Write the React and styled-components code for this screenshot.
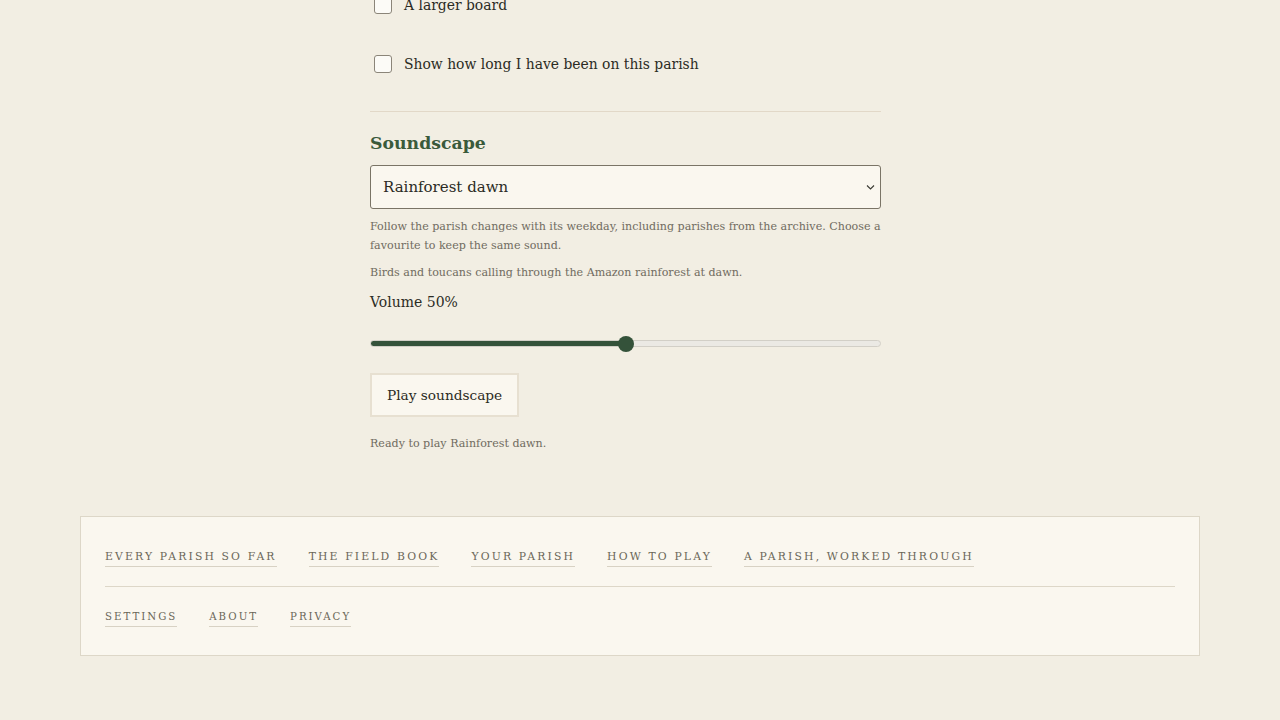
import React, { useState } from "react";
import styled, { createGlobalStyle } from "styled-components";

const GlobalStyle = createGlobalStyle`
  html, body {
    margin: 0;
    padding: 0;
    background: #f2eee3;
    font-family: "DejaVu Serif", "Liberation Serif", serif;
    color: #2b2b24;
  }
  body {
    overflow: hidden;
  }
`;

const Page = styled.div`
  display: flex;
  flex-direction: column;
  align-items: center;
  padding-bottom: 60px;
`;

const Column = styled.main`
  width: 511px;
  margin-top: -16px;
  margin-right: 29px;
  display: flex;
  flex-direction: column;
`;

const OptionRow = styled.label`
  display: flex;
  align-items: center;
  gap: 12px;
  min-height: 42px;
  margin-bottom: 17px;
  padding-left: 4px;
  font-size: 13.9px;
  cursor: pointer;
`;

const Box = styled.span`
  width: 18px;
  height: 18px;
  box-sizing: border-box;
  border: 1px solid #8b8579;
  border-radius: 3px;
  background: #fcfbf7;
  flex-shrink: 0;
`;

const Rule = styled.hr`
  border: 0;
  border-top: 1px solid #e2d8c8;
  margin: 9px 0 0;
  width: 100%;
`;

const Heading = styled.h2`
  margin: 18px 0 0;
  font-size: 17.3px;
  line-height: 26px;
  font-weight: 700;
  color: #3a5a3b;
`;

const SelectWrap = styled.div`
  position: relative;
  margin-top: 9px;
`;

const Select = styled.select`
  appearance: none;
  width: 100%;
  height: 44px;
  box-sizing: border-box;
  border: 1px solid #7a7466;
  border-radius: 3px;
  background: #faf7ef;
  padding: 0 12px;
  font-family: inherit;
  font-size: 15px;
  color: #2b2b24;
`;

const Chevron = styled.svg`
  position: absolute;
  right: 6px;
  top: 19px;
  pointer-events: none;
`;

const Help = styled.p`
  margin: 8px 0 0;
  font-size: 11.1px;
  line-height: 19px;
  color: #706b60;
`;

const VolumeLabel = styled.div`
  margin-top: 9px;
  font-size: 14px;
  line-height: 22px;
  color: #2b2b24;
`;

const Range = styled.input`
  appearance: none;
  -webkit-appearance: none;
  width: 100%;
  height: 7px;
  margin: 27px 0 0;
  border: 1px solid #d2cfc7;
  border-radius: 4px;
  box-sizing: border-box;
  outline: none;

  &::-webkit-slider-thumb {
    -webkit-appearance: none;
    width: 16px;
    height: 16px;
    border-radius: 50%;
    background: #34523a;
    border: none;
  }
`;

const PlayButton = styled.button`
  align-self: flex-start;
  margin-top: 26px;
  height: 44px;
  padding: 0 15px;
  background: #faf7ef;
  border: 2px solid #e7e0d1;
  font-family: inherit;
  font-size: 13.7px;
  color: #2b2b24;
  cursor: pointer;
`;

const Status = styled(Help)`
  margin-top: 17px;
`;

const Footer = styled.footer`
  width: 1120px;
  box-sizing: border-box;
  margin-top: 63px;
  background: #faf7ef;
  border: 1px solid #ddd7c8;
  padding: 32px 24px 28px;
`;

const LinkRow = styled.nav`
  display: flex;
  gap: 32px;
`;

const FooterLink = styled.a`
  font-size: ${(p) => (p.$small ? "10.2px" : "10.8px")};
  line-height: 16px;
  letter-spacing: ${(p) => (p.$small ? "2px" : "2.15px")};
  text-transform: uppercase;
  color: #6b6759;
  text-decoration: none;
  padding-bottom: 1px;
  border-bottom: 1px solid #d8d2c4;
`;

const FooterRule = styled.hr`
  border: 0;
  border-top: 1px solid #ddd7c8;
  margin: 19px 0 22px;
`;

const mainLinks = [
  "Every parish so far",
  "The field book",
  "Your parish",
  "How to play",
  "A parish, worked through",
];
const smallLinks = ["Settings", "About", "Privacy"];

export default function App() {
  const [volume, setVolume] = useState(50);

  return (
    <Page>
      <GlobalStyle />
      <Column>
        <OptionRow>
          <Box />
          A larger board
        </OptionRow>
        <OptionRow>
          <Box />
          Show how long I have been on this parish
        </OptionRow>
        <Rule />
        <Heading>Soundscape</Heading>
        <SelectWrap>
          <Select defaultValue="rainforest">
            <option value="rainforest">Rainforest dawn</option>
          </Select>
          <Chevron width="9" height="7" viewBox="0 0 9 7">
            <path d="M1 1.5l3.5 3.5 3.5-3.5" fill="none" stroke="#3a3a33" strokeWidth="1.1" />
          </Chevron>
        </SelectWrap>
        <Help>
          Follow the parish changes with its weekday, including parishes from the
          archive. Choose a favourite to keep the same sound.
        </Help>
        <Help>Birds and toucans calling through the Amazon rainforest at dawn.</Help>
        <VolumeLabel>Volume {volume}%</VolumeLabel>
        <Range
          type="range"
          min="0"
          max="100"
          value={volume}
          onChange={(e) => setVolume(Number(e.target.value))}
          style={{
            background: `linear-gradient(to right, #34523a ${volume}%, #ebe9e4 ${volume}%)`,
          }}
        />
        <PlayButton>Play soundscape</PlayButton>
        <Status>Ready to play Rainforest dawn.</Status>
      </Column>
      <Footer>
        <LinkRow>
          {mainLinks.map((l) => (
            <FooterLink key={l} href="#">
              {l}
            </FooterLink>
          ))}
        </LinkRow>
        <FooterRule />
        <LinkRow>
          {smallLinks.map((l) => (
            <FooterLink key={l} href="#" $small>
              {l}
            </FooterLink>
          ))}
        </LinkRow>
      </Footer>
    </Page>
  );
}
